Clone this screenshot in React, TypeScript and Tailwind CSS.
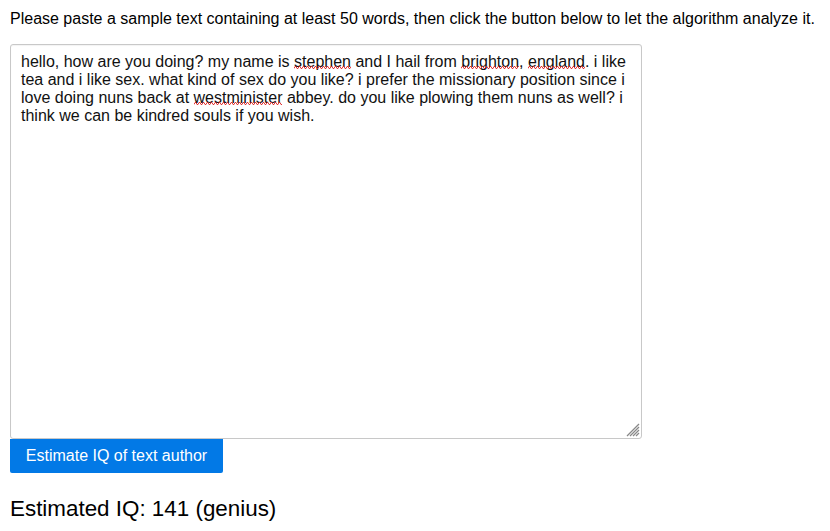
import React from "react";

let pid = 0;
const W = ({ children }: { children: React.ReactNode }) => {
  const id = React.useMemo(() => `sq${pid++}`, []);
  return (
    <span className="relative inline-block">
      {children}
      <svg className="absolute left-0 bottom-[2px] w-full h-[3px]" height="3" preserveAspectRatio="none">
        <defs>
          <pattern id={id} width="4" height="3" patternUnits="userSpaceOnUse">
            <path d="M0 2.5 L1 0.5 L2 0.5 L3 2.5 L4 2.5" fill="none" stroke="#e02020" strokeWidth="0.9" />
          </pattern>
        </defs>
        <rect x="0" y="0" width="100%" height="3" fill={`url(#${id})`} />
      </svg>
    </span>
  );
};

export default function App() {
  return (
    <div className="bg-white w-[830px] h-[531px] px-[10px] pt-[10px] text-black" style={{ fontFamily: '"Liberation Sans", Arial, sans-serif' }}>
      <p className="text-[16px] leading-[18px] whitespace-nowrap">
        Please paste a sample text containing at least 50 words, then click the button below to let the algorithm analyze it.
      </p>
      <div className="relative mt-[16px] w-[632px] h-[395px] border border-[#c8c8c8] rounded-[3px] shadow-[inset_0_1px_1px_rgba(0,0,0,0.05)] px-[10px] py-[8px] text-[16px] leading-[18px] text-[#111]">
        <div className="whitespace-nowrap">
          hello, how are you doing? my name is <W>stephen</W> and I hail from <W>brighton</W>, <W>england</W>. i like
          <br />
          tea and i like sex. what kind of sex do you like? i prefer the missionary position since i
          <br />
          love doing nuns back at <W>westminister</W> abbey. do you like plowing them nuns as well? i
          <br />
          think we can be kindred souls if you wish.
        </div>
        <svg className="absolute right-[1px] bottom-[1px]" width="14" height="14" viewBox="0 0 14 14">
          <g stroke="#888" strokeWidth="1.2">
            <line x1="13" y1="1" x2="1" y2="13" />
            <line x1="13" y1="4" x2="4" y2="13" />
            <line x1="13" y1="7" x2="7" y2="13" />
            <line x1="13" y1="10" x2="10" y2="13" />
          </g>
        </svg>
      </div>
      <button className="block w-[213px] h-[34px] bg-[#0279e6] text-white text-[16px] rounded-b-[2px] text-center">
        Estimate IQ of text author
      </button>
      <div className="mt-[23px] text-[22.4px] leading-[26px]">Estimated IQ: 141 (genius)</div>
    </div>
  );
}
